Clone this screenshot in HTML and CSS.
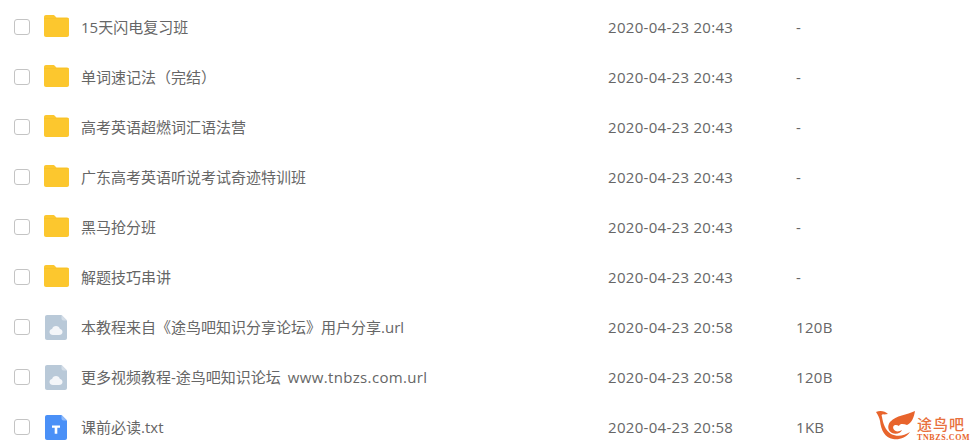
FILE: index.html
```html
<!DOCTYPE html>
<html lang="zh-CN">
<head>
    <meta charset="UTF-8">
    <title>文件列表</title>
    <link rel="stylesheet" href="styles.css">
</head>
<body>
    <svg class="icon-defs" width="0" height="0">
        <symbol id="folder" viewBox="0 0 25 22">
            <path d="M2 0h7c1 0 1.600.4 2.200 1.200L12.500 2.500H23c1.200 0 2 .8 2 2V20c0 1.200-.8 2-2 2H2c-1.200 0-2-.8-2-2V2C0 .8.800 0 2 0z" fill="#fcc72e"/>
            <path d="M0 3h25v1H0z" fill="#f3b920" opacity=".35"/>
        </symbol>
        <symbol id="url" viewBox="0 0 22 25">
            <path d="M2 0h14.500L22 5.500V23c0 1.100-.9 2-2 2H2c-1.100 0-2-.9-2-2V2C0 .9.900 0 2 0z" fill="#b9c9d8"/>
            <path d="M16.500 0L22 5.500h-3.500c-1.100 0-2-.9-2-2z" fill="#d3dde7"/>
            <path d="M8 20c-2 0-3.500-1.300-3.500-3 0-1.500 1.100-2.700 2.600-2.900.4-1.800 2-3.100 3.900-3.100 1.900 0 3.500 1.300 3.900 3.100 1.500.2 2.600 1.400 2.600 2.900 0 1.700-1.500 3-3.500 3z" fill="#f4f6f9"/>
        </symbol>
        <symbol id="txt" viewBox="0 0 22 25">
            <path d="M2 0h14.500L22 5.500V23c0 1.100-.9 2-2 2H2c-1.100 0-2-.9-2-2V2C0 .9.900 0 2 0z" fill="#4a90f7"/>
            <path d="M16.500 0L22 5.500h-3.500c-1.100 0-2-.9-2-2z" fill="#8fbafa"/>
            <path d="M7 10.500h8v2.300h-2.700v6H9.700v-6H7z" fill="#fff"/>
        </symbol>
    </svg>

    <div class="file-list">
        <div class="file-row">
            <span class="check"></span>
            <svg class="file-icon"><use href="#folder"/></svg>
            <span class="name">15天闪电复习班</span>
            <span class="date">2020-04-23 20:43</span>
            <span class="size">-</span>
        </div>
        <div class="file-row">
            <span class="check"></span>
            <svg class="file-icon"><use href="#folder"/></svg>
            <span class="name">单词速记法（完结）</span>
            <span class="date">2020-04-23 20:43</span>
            <span class="size">-</span>
        </div>
        <div class="file-row">
            <span class="check"></span>
            <svg class="file-icon"><use href="#folder"/></svg>
            <span class="name">高考英语超燃词汇语法营</span>
            <span class="date">2020-04-23 20:43</span>
            <span class="size">-</span>
        </div>
        <div class="file-row">
            <span class="check"></span>
            <svg class="file-icon"><use href="#folder"/></svg>
            <span class="name">广东高考英语听说考试奇迹特训班</span>
            <span class="date">2020-04-23 20:43</span>
            <span class="size">-</span>
        </div>
        <div class="file-row">
            <span class="check"></span>
            <svg class="file-icon"><use href="#folder"/></svg>
            <span class="name">黑马抢分班</span>
            <span class="date">2020-04-23 20:43</span>
            <span class="size">-</span>
        </div>
        <div class="file-row">
            <span class="check"></span>
            <svg class="file-icon"><use href="#folder"/></svg>
            <span class="name">解题技巧串讲</span>
            <span class="date">2020-04-23 20:43</span>
            <span class="size">-</span>
        </div>
        <div class="file-row">
            <span class="check"></span>
            <svg class="file-icon doc"><use href="#url"/></svg>
            <span class="name">本教程来自《途鸟吧知识分享论坛》用户分享.url</span>
            <span class="date">2020-04-23 20:58</span>
            <span class="size">120B</span>
        </div>
        <div class="file-row">
            <span class="check"></span>
            <svg class="file-icon doc"><use href="#url"/></svg>
            <span class="name">更多视频教程-途鸟吧知识论坛 <span class="latin">www.tnbzs.com.url</span></span>
            <span class="date">2020-04-23 20:58</span>
            <span class="size">120B</span>
        </div>
        <div class="file-row">
            <span class="check"></span>
            <svg class="file-icon doc"><use href="#txt"/></svg>
            <span class="name">课前必读.txt</span>
            <span class="date">2020-04-23 20:58</span>
            <span class="size">1KB</span>
        </div>
    </div>

    <!-- watermark -->
    <div class="watermark">
        <svg class="wm-logo" viewBox="0 0 44 32">
            <path d="M2 3C6 1 11 2 14 5L10 5.500C8 5 7 6 8 8C9 14 11 21 17 25C23 28 30 27 36 23C32 29 25 31 19 30C11 29 7 21 6 12C5.500 9 4 6 2 3z" fill="#e8642c"/>
            <path d="M41 2C33 6 22 6 16 13C13 17 14 22 18 24C22 26 27 24 28 21C25 23 21 23 19.500 20C18 16 22 15 25 17C26 14 30 15 33 16C38 14 40 8 41 2z" fill="#e8642c"/>
        </svg>
        <div class="wm-text">
            <span class="wm-name">途鸟吧</span>
            <span class="wm-url">TNBZS.COM</span>
        </div>
    </div>
</body>
</html>
```

FILE: styles.css
```css
body {
    font-family: "Open Sans", "Noto Sans CJK SC", sans-serif;
    font-size: 15px;
    color: #666;
    background-color: #fff;
    margin: 0;
    padding: 0;
    overflow: hidden;
}
.icon-defs {
    display: block;
    height: 0;
}
.file-list {
    padding-top: 1px;
}
.file-row {
    display: flex;
    align-items: center;
    height: 50px;
    padding-left: 14px;
}
.check {
    flex: none;
    width: 14px;
    height: 14px;
    border: 1px solid #c4c4c4;
    border-radius: 3px;
    margin-top: 2px;
}
.file-icon {
    flex: none;
    width: 25px;
    height: 22px;
    margin-left: 14px;
    margin-bottom: 1px;
}
.file-icon.doc {
    width: 22px;
    height: 25px;
    margin-left: 15px;
    margin-right: 2px;
    margin-bottom: -2px;
}
.name {
    flex: none;
    width: 527px;
    margin-left: 12px;
}
.latin {
    letter-spacing: .35px;
    margin-left: 3px;
}
.date {
    flex: none;
    width: 188px;
    margin-top: 2px;
    letter-spacing: .3px;
}
.size {
    flex: none;
    margin-top: 2px;
    letter-spacing: .3px;
}
.watermark {
    position: absolute;
    left: 874px;
    top: 409px;
    display: flex;
    align-items: flex-end;
    color: #e8642c;
}
.wm-logo {
    width: 44px;
    height: 32px;
}
.wm-text {
    display: flex;
    flex-direction: column;
    margin-left: -1px;
    margin-bottom: -1px;
}
.wm-name {
    font-size: 15px;
    font-weight: 500;
    line-height: 17px;
    letter-spacing: 1px;
    color: #e8703c;
}
.wm-url {
    font-family: "Liberation Serif", serif;
    font-size: 8px;
    line-height: 9px;
    font-weight: bold;
    letter-spacing: .6px;
}
```
